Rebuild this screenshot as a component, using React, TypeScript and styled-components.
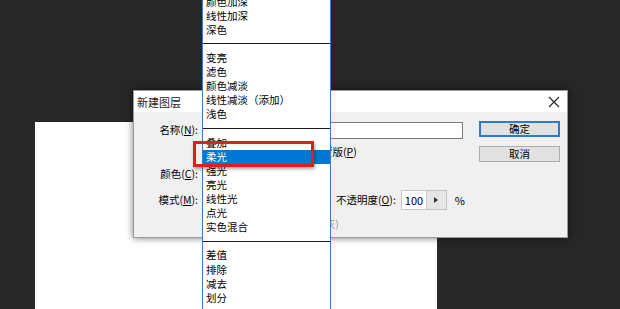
import styled, { createGlobalStyle } from 'styled-components'

const GlobalStyle = createGlobalStyle`
	html, body {
		margin: 0;
		padding: 0;
		background: #272727;
		overflow: hidden;
	}
	body {
		font-family: 'Noto Sans CJK SC', 'Noto Sans', sans-serif;
		font-size: 10.5px;
		color: #000;
	}
`

type Item = { label: string; sep?: boolean; active?: boolean }

const modes: Item[] = [
	{ label: '颜色加深' },
	{ label: '线性加深' },
	{ label: '深色' },
	{ label: '', sep: true },
	{ label: '变亮' },
	{ label: '滤色' },
	{ label: '颜色减淡' },
	{ label: '线性减淡（添加）' },
	{ label: '浅色' },
	{ label: '', sep: true },
	{ label: '叠加' },
	{ label: '柔光', active: true },
	{ label: '强光' },
	{ label: '亮光' },
	{ label: '线性光' },
	{ label: '点光' },
	{ label: '实色混合' },
	{ label: '', sep: true },
	{ label: '差值' },
	{ label: '排除' },
	{ label: '减去' },
	{ label: '划分' },
]

export default function App() {
	return (
		<Stage>
			<GlobalStyle />
			<Canvas />
			<Dialog>
				<TitleBar>
					<Title>新建图层</Title>
					<CloseIcon width='12' height='12' viewBox='0 0 12 12'>
						<path d='M1 1 L11 11 M11 1 L1 11' stroke='#222' strokeWidth='1.1' fill='none' />
					</CloseIcon>
				</TitleBar>
				<Body>
					<Form>
						<Label>
							名称(<u>N</u>):
						</Label>
						<TextInput />
						<Spacer />
						<CheckRow>
							<CheckBox />
							<span>
								使用前一图层创建剪贴蒙版(<u>P</u>)
							</span>
						</CheckRow>
						<Label>
							颜色(<u>C</u>):
						</Label>
						<Select $width={128} />
						<Label>
							模式(<u>M</u>):
						</Label>
						<ModeRow>
							<Select $width={128} />
							<span>
								不透明度(<u>O</u>):
							</span>
							<NumberField>
								<NumberValue>100</NumberValue>
								<SpinButton>
									<svg width='4' height='6' viewBox='0 0 4 6'>
										<path d='M0 0 L4 3 L0 6 Z' fill='#333' />
									</svg>
								</SpinButton>
							</NumberField>
							<Percent>%</Percent>
						</ModeRow>
						<Spacer />
						<CheckRow $disabled $indent={7}>
							<CheckBox />
							<span>填充柔光中性色(50% 灰)</span>
						</CheckRow>
					</Form>
					<Buttons>
						<Button $primary>确定</Button>
						<Button>取消</Button>
					</Buttons>
				</Body>
			</Dialog>
			<ModeList>
				{modes.map((m, i) =>
					m.sep ? (
						<Separator key={i} />
					) : (
						<ModeItem key={i} $active={m.active}>
							{m.label}
						</ModeItem>
					)
				)}
			</ModeList>
			<Highlight />
		</Stage>
	)
}

const Stage = styled.div`
	position: relative;
	width: 620px;
	height: 309px;
	overflow: hidden;
	background: #272727;
`
const Canvas = styled.div`
	position: absolute;
	left: 35px;
	top: 122px;
	width: 402px;
	height: 200px;
	background: #ffffff;
`
const Dialog = styled.div`
	position: absolute;
	left: 133px;
	top: 90px;
	width: 435px;
	height: 148px;
	display: flex;
	flex-direction: column;
	background: #f0f0f0;
	border: 1px solid #9a9a9a;
	box-sizing: border-box;
	box-shadow: 0 0 7px rgba(0, 0, 0, 0.55);
`
const TitleBar = styled.div`
	height: 21px;
	display: flex;
	align-items: center;
	justify-content: space-between;
	padding: 0 7px 0 3px;
	background: #ffffff;
`
const Title = styled.span`
	font-size: 11px;
	color: #222;
`
const CloseIcon = styled.svg`
	display: block;
`
const Body = styled.div`
	flex: 1;
	display: flex;
	padding: 9px 0 0 0;
`
const Form = styled.div`
	width: 330px;
	display: grid;
	grid-template-columns: 64px 266px;
	grid-template-rows: 18px 26px 17px 36px 12px;
	column-gap: 4px;
	align-items: center;
	line-height: 14px;
`
const Label = styled.span`
	text-align: right;
	white-space: nowrap;
`
const Spacer = styled.span``
const TextInput = styled.div`
	width: 261px;
	height: 17px;
	box-sizing: border-box;
	background: #fff;
	border: 1px solid #7a7a7a;
`
const CheckRow = styled.div<{ $disabled?: boolean; $indent?: number }>`
	display: flex;
	align-items: center;
	gap: 3px;
	white-space: nowrap;
	padding-left: ${(p) => p.$indent ?? 0}px;
	color: ${(p) => (p.$disabled ? '#9a9a9a' : '#000')};
`
const CheckBox = styled.span`
	width: 10px;
	height: 10px;
	border: 1px solid #333;
	background: #fff;
`
const Select = styled.div<{ $width: number }>`
	width: ${(p) => p.$width}px;
	height: 18px;
	box-sizing: border-box;
	border: 1px solid #adadad;
	background: #e1e1e1;
`
const ModeRow = styled.div`
	display: flex;
	align-items: center;
	gap: 6px;
	white-space: nowrap;
`
const NumberField = styled.div`
	display: flex;
	height: 20px;
	width: 46px;
	box-sizing: border-box;
	border: 1px solid #c4c4c4;
	background: #fff;
	margin-left: -1px;
`
const NumberValue = styled.span`
	flex: 1;
	display: flex;
	align-items: center;
	padding-left: 3px;
	font-size: 11px;
`
const SpinButton = styled.span`
	width: 19px;
	display: flex;
	align-items: center;
	justify-content: center;
	background: #e6e6e6;
	border-left: 1px solid #cfcfcf;
`
const Percent = styled.span`
	margin-left: 2px;
	font-size: 11px;
`
const Buttons = styled.div`
	margin-left: 15px;
	display: flex;
	flex-direction: column;
	gap: 9px;
`
const Button = styled.div<{ $primary?: boolean }>`
	width: 81px;
	height: 16px;
	box-sizing: border-box;
	display: flex;
	align-items: center;
	justify-content: center;
	background: #e1e1e1;
	border: ${(p) => (p.$primary ? '2px solid #2a7bd6' : '1px solid #adadad')};
	line-height: 12px;
`
const ModeList = styled.div`
	position: absolute;
	left: 202px;
	top: -5.5px;
	width: 129px;
	box-sizing: border-box;
	background: #ffffff;
	border-left: 1px solid #3a7cc2;
	border-right: 1px solid #3a7cc2;
	padding-bottom: 40px;
`
const ModeItem = styled.div<{ $active?: boolean }>`
	height: 14.12px;
	line-height: 14.12px;
	padding-left: 3px;
	white-space: nowrap;
	background: ${(p) => (p.$active ? '#0078d7' : 'transparent')};
	color: ${(p) => (p.$active ? '#ffffff' : '#000000')};
`
const Separator = styled.div`
	height: 14.12px;
	display: flex;
	align-items: center;
	&::after {
		content: '';
		flex: 1;
		height: 1px;
		background: #1c1c1c;
	}
`
const Highlight = styled.div`
	position: absolute;
	left: 193px;
	top: 141px;
	width: 121px;
	height: 26px;
	box-sizing: border-box;
	border: 3px solid #e21d1d;
	box-shadow: 1px 2px 3px rgba(0, 0, 0, 0.35);
`
